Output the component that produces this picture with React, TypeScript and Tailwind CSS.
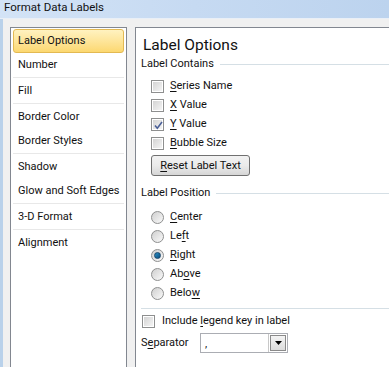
import React from "react";

const font = { fontFamily: 'Roboto, "Noto Sans", sans-serif' };

function U({ children }: { children: React.ReactNode }) {
  return <span className="underline decoration-1 underline-offset-2">{children}</span>;
}

function CheckBox({ checked = false }: { checked?: boolean }) {
  return (
    <div className="relative w-[13px] h-[13px] border border-[#8e8f8f] bg-white p-px shrink-0">
      <div className="w-full h-full bg-gradient-to-br from-[#d4d4d4] to-[#f4f4f4]" />
      {checked && (
        <svg className="absolute left-0 top-0" width="13" height="13" viewBox="0 0 13 13">
          <path d="M3 6.5 L5.3 9.2 L10 3" fill="none" stroke="#4a5f97" strokeWidth="1.6" />
        </svg>
      )}
    </div>
  );
}

function Radio({ checked = false }: { checked?: boolean }) {
  return (
    <div className="w-[13px] h-[13px] rounded-full border border-[#8e8f8f] bg-gradient-to-br from-[#cfcfcf] to-[#fafafa] flex items-center justify-center shrink-0">
      {checked && (
        <div className="w-[7px] h-[7px] rounded-full border border-[#17456b] bg-gradient-to-br from-[#2a8fc4] to-[#0d4f80]" />
      )}
    </div>
  );
}

function SectionTitle({ children }: { children: React.ReactNode }) {
  return (
    <div className="flex items-center h-[16px] pl-[5px]">
      <span className="whitespace-nowrap">{children}</span>
      <div className="flex-1 h-px bg-[#d5dfe5] ml-[6px]" />
    </div>
  );
}

export default function App() {
  const groups = [
    ["Label Options", "Number"],
    ["Fill"],
    ["Border Color", "Border Styles"],
    ["Shadow", "Glow and Soft Edges"],
    ["3-D Format"],
    ["Alignment"],
  ];

  return (
    <div className="w-[389px] h-[367px] overflow-hidden bg-[#f0f0f0] flex flex-col text-[11px] text-[#111]" style={font}>
      {/* Title bar */}
      <div className="h-[18px] bg-gradient-to-r from-[#d3e3f6] via-[#c6daf2] to-[#bcd3ee] pl-[4px] leading-[15px] text-[11.5px]">
        Format Data Labels
      </div>
      <div className="h-px bg-[#e9eff7]" />

      <div className="flex flex-1">
        <div className="w-[3px] bg-[#b9d1ea]" />

        <div className="flex flex-1 pt-[8px] pl-[7px] gap-[8px]">
          {/* Left list */}
          <div className="w-[117px] border border-[#828790] border-b-0 bg-white pt-px">
            {groups.map((g, gi) => (
              <div key={gi}>
                {g.map((item) =>
                  item === "Label Options" ? (
                    <div
                      key={item}
                      className="mx-[2px] h-[24px] border border-[#e3b952] rounded-[3px] bg-gradient-to-b from-[#fff2c0] to-[#fcd870] px-[4px] flex items-center whitespace-nowrap"
                    >
                      {item}
                    </div>
                  ) : (
                    <div key={item} className="mx-[2px] h-[24px] px-[5px] flex items-center whitespace-nowrap">
                      {item}
                    </div>
                  )
                )}
                {gi < groups.length - 1 && (
                  <div className="mx-[2px] h-[2px]">
                    <div className="h-px bg-[#e8e8e8]" />
                  </div>
                )}
              </div>
            ))}
          </div>

          {/* Right panel */}
          <div className="flex-1 border-l border-t border-[#828790] bg-white flex flex-col">
            <div className="pl-[7px] pt-[7px] h-[28px] text-[15.5px] leading-[20px]">Label Options</div>

            <SectionTitle>Label Contains</SectionTitle>
            <div className="flex flex-col mt-[5px] pl-[15px]">
              {[
                [<><U>S</U>eries Name</>, false],
                [<><U>X</U> Value</>, false],
                [<><U>Y</U> Value</>, true],
                [<><U>B</U>ubble Size</>, false],
              ].map(([label, checked], i) => (
                <div key={i} className="h-[19px] flex items-center gap-[6px]">
                  <CheckBox checked={checked as boolean} />
                  <span>{label as React.ReactNode}</span>
                </div>
              ))}
            </div>
            <div className="pl-[15px] mt-[2px]">
              <button className="w-[99px] h-[21px] border border-[#707070] rounded-[3px] bg-gradient-to-b from-[#f2f2f2] via-[#ebebeb] to-[#d6d6d6] flex items-center justify-center leading-none">
                <span><U>R</U>eset Label Text</span>
              </button>
            </div>

            <div className="mt-[9px]">
              <SectionTitle>Label Position</SectionTitle>
            </div>
            <div className="flex flex-col mt-[7px] pl-[15px]">
              {[
                [<><U>C</U>enter</>, false],
                [<>Le<U>f</U>t</>, false],
                [<><U>R</U>ight</>, true],
                [<>Ab<U>o</U>ve</>, false],
                [<>Belo<U>w</U></>, false],
              ].map(([label, checked], i) => (
                <div key={i} className="h-[19px] flex items-center gap-[6px]">
                  <Radio checked={checked as boolean} />
                  <span>{label as React.ReactNode}</span>
                </div>
              ))}
            </div>

            <div className="ml-[5px] mt-[5px] h-px bg-[#d5dfe5]" />

            <div className="pl-[6px] mt-[3px] h-[19px] flex items-center gap-[7px]">
              <CheckBox />
              <span>Include <U>l</U>egend key in label</span>
            </div>

            <div className="pl-[5px] mt-[2px] h-[20px] flex items-center">
              <span className="w-[59px]">S<U>e</U>parator</span>
              <div className="w-[88px] h-[20px] border border-[#abadb3] bg-white flex items-center">
                <span className="flex-1 pl-[4px] leading-none">,</span>
                <div className="w-[19px] h-full border-l border-[#c8c8c8] p-px">
                  <div className="w-full h-full border border-[#8a8a8a] bg-gradient-to-b from-[#f4f4f4] to-[#dcdcdc] flex items-center justify-center">
                    <svg width="7" height="4" viewBox="0 0 7 4">
                      <path d="M0 0 H7 L3.5 4 Z" fill="#000" />
                    </svg>
                  </div>
                </div>
              </div>
            </div>
          </div>
        </div>
      </div>
    </div>
  );
}
